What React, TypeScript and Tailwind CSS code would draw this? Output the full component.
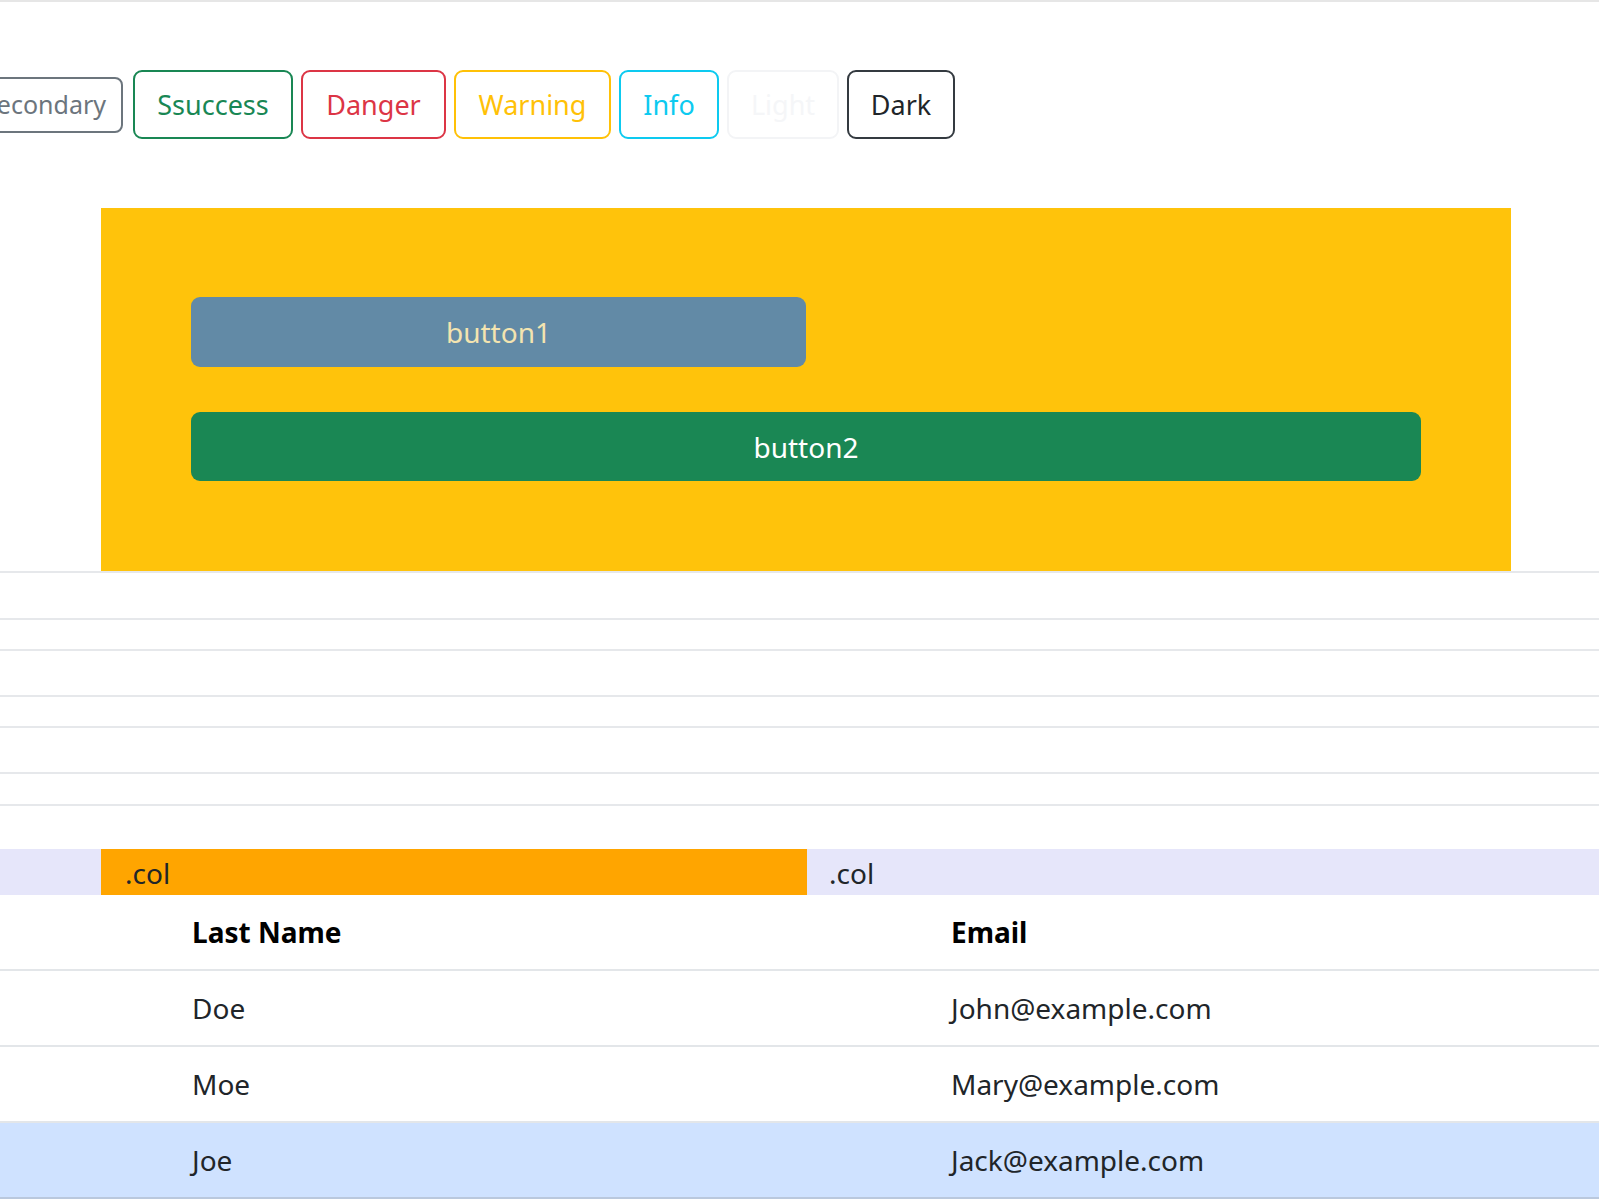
import React from "react";

const outline = [
  { label: "Ssuccess", cls: "w-[160px] border-[#198754] text-[#198754]" },
  { label: "Danger", cls: "w-[145px] border-[#dc3545] text-[#dc3545]" },
  { label: "Warning", cls: "w-[157px] border-[#ffc107] text-[#ffc107]" },
  { label: "Info", cls: "w-[100px] border-[#0dcaf0] text-[#0dcaf0]" },
  { label: "Light", cls: "w-[112px] border-[#f3f4f6] text-[#f5f6f8]" },
  { label: "Dark", cls: "w-[108px] border-[#343a40] text-[#212529]" },
];

const rows = [
  { last: "Doe", email: "John@example.com", cls: "bg-white border-[#e3e6e9]" },
  { last: "Moe", email: "Mary@example.com", cls: "bg-white border-[#e3e6e9]" },
  { last: "Joe", email: "Jack@example.com", cls: "bg-[#cfe2ff] border-[#bac8dd]" },
];

export default function App() {
  return (
    <div
      className="w-full min-h-[1200px] bg-white overflow-hidden text-[#212529]"
      style={{ fontFamily: '"Noto Sans", "Open Sans", sans-serif' }}
    >
      <div className="border-t-2 border-[#e6e6e6]" />

      {/* Outline buttons */}
      <div className="flex items-center gap-[8px] mt-[68px] whitespace-nowrap">
        <div className="w-[123px] shrink-0 flex justify-end mr-[2px]">
          <button className="shrink-0 h-[56px] px-[15px] border-2 border-[#6c757d] text-[#6c757d] rounded-[8px] text-[25px] leading-none bg-white">
            Secondary
          </button>
        </div>
        {outline.map((b) => (
          <button
            key={b.label}
            className={`shrink-0 h-[69px] border-2 rounded-[9px] text-[27px] leading-none bg-white flex items-center justify-center ${b.cls}`}
          >
            {b.label}
          </button>
        ))}
      </div>

      {/* Yellow panel */}
      <div className="pt-[69px] border-b-2 border-[#e6e8eb]">
        <div className="ml-[101px] w-[1410px] h-[363px] bg-[#ffc30b] px-[90px] py-[89px] flex flex-col gap-[45px]">
          <button className="w-1/2 h-[70px] rounded-[9px] bg-[#628aa6] text-[#f3e4b0] text-[28px] leading-none">
            button1
          </button>
          <button className="w-full h-[69px] rounded-[9px] bg-[#1a8754] text-white text-[28px] leading-none">
            button2
          </button>
        </div>
      </div>

      {/* Separator lines */}
      <div className="h-[47px] border-b-2 border-[#e6e8eb]" />
      <div className="h-[31px] border-b-2 border-[#e6e8eb]" />
      <div className="h-[46px] border-b-2 border-[#e6e8eb]" />
      <div className="h-[31px] border-b-2 border-[#e6e8eb]" />
      <div className="h-[46px] border-b-2 border-[#e6e8eb]" />
      <div className="h-[32px] border-b-2 border-[#e6e8eb]" />
      <div className="h-[43px]" />

      {/* .col row */}
      <div className="h-[46px] bg-[#e6e6fa] flex pl-[101px] text-[28px]">
        <div className="w-[706px] bg-[#ffa500] pl-[24px] pt-[2px] flex items-center">.col</div>
        <div className="flex-1 pl-[22px] pt-[2px] flex items-center">.col</div>
      </div>

      {/* Table */}
      <table className="w-full table-fixed border-collapse text-[28px]">
        <colgroup>
          <col className="w-[178px]" />
          <col className="w-[759px]" />
          <col />
        </colgroup>
        <thead>
          <tr className="border-b-2 border-[#e3e6e9]">
            <th className="h-[75px]" />
            <th className="h-[75px] px-[14px] text-left font-bold text-black">Last Name</th>
            <th className="h-[75px] px-[14px] text-left font-bold text-black">Email</th>
          </tr>
        </thead>
        <tbody>
          {rows.map((r) => (
            <tr key={r.last} className={`border-b-2 ${r.cls}`}>
              <td className="h-[76px]" />
              <td className="h-[76px] px-[14px]">{r.last}</td>
              <td className="h-[76px] px-[14px]">{r.email}</td>
            </tr>
          ))}
        </tbody>
      </table>
    </div>
  );
}
